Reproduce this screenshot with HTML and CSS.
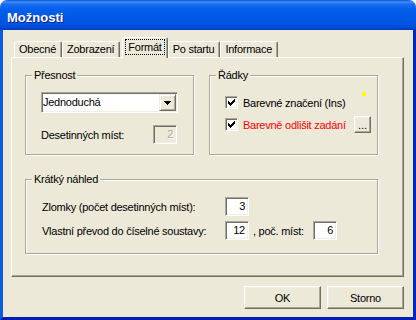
FILE: index.html
```html
<!DOCTYPE html>
<html lang="cs">
<head>
    <meta charset="UTF-8">
    <title>Možnosti</title>
    <link rel="stylesheet" href="styles.css">
</head>
<body>
    <div class="window">
        <div class="titlebar"><span class="title">Možnosti</span></div>

        <div class="frame">
            <!-- tab strip -->
            <div class="tabs">
                <div class="tab">Obecné</div>
                <div class="tab">Zobrazení</div>
                <div class="tab active"><span class="focus">Formát</span></div>
                <div class="tab">Po startu</div>
                <div class="tab">Informace</div>
            </div>

            <div class="panel">
                <div class="top-row">
                    <fieldset class="group presnost">
                        <legend>Přesnost</legend>
                        <div class="select">
                            <span class="select-value">Jednoduchá</span>
                            <span class="select-btn">
                                <svg width="7" height="4" viewBox="0 0 7 4"><path d="M0 0h7v1H0z M1 1h5v1H1z M2 2h3v1H2z M3 3h1v1H3z" fill="#000"/></svg>
                            </span>
                        </div>
                        <div class="field-row">
                            <span>Desetinných míst:</span>
                            <span class="edit disabled">2</span>
                        </div>
                    </fieldset>

                    <fieldset class="group radky">
                        <legend>Řádky</legend>
                        <div class="check-row first">
                            <span class="check">
                                <svg width="7" height="7" viewBox="0 0 7 7"><path d="M6 0h1v1H6z M5 1h2v1H5z M0 2h1v1H0z M4 2h3v1H4z M0 3h2v1H0z M3 3h3v1H3z M0 4h5v1H0z M1 5h3v1H1z M2 6h1v1H2z" fill="#000"/></svg>
                            </span>
                            <span class="check-label">Barevné značení (Ins)</span>
                            <span class="dot"></span>
                        </div>
                        <div class="check-row">
                            <span class="check">
                                <svg width="7" height="7" viewBox="0 0 7 7"><path d="M6 0h1v1H6z M5 1h2v1H5z M0 2h1v1H0z M4 2h3v1H4z M0 3h2v1H0z M3 3h3v1H3z M0 4h5v1H0z M1 5h3v1H1z M2 6h1v1H2z" fill="#000"/></svg>
                            </span>
                            <span class="check-label red">Barevně odlišit zadání</span>
                            <span class="small-btn">...</span>
                        </div>
                    </fieldset>
                </div>

                <fieldset class="group nahled">
                    <legend>Krátký náhled</legend>
                    <div class="preview-grid">
                        <span>Zlomky (počet desetinných míst):</span>
                        <span class="edit">3</span>
                        <span></span>
                        <span></span>

                        <span>Vlastní převod do číselné soustavy:</span>
                        <span class="edit">12</span>
                        <span class="after">, poč. míst:</span>
                        <span class="edit">6</span>
                    </div>
                </fieldset>
            </div>

            <div class="buttons">
                <button class="btn">OK</button>
                <button class="btn">Storno</button>
            </div>
        </div>
    </div>
</body>
</html>
```

FILE: styles.css
```css
/* XP dialog look */
body {
    margin: 0;
    background: #fff;
    font-family: "Liberation Sans", Arial, sans-serif;
    font-size: 11px;
    letter-spacing: -0.25px;
    color: #000;
}

.window {
    width: 416px;
    height: 320px;
    display: flex;
    flex-direction: column;
}

.titlebar {
    height: 30px;
    box-sizing: border-box;
    padding: 10px 0 0 7px;
    border-radius: 7px 7px 0 0;
    background: linear-gradient(to bottom, #0A5ADB 0%, #3D8DF5 7%, #1A6CF2 14%, #0460EC 30%, #0058E6 60%, #0054E1 82%, #0046CF 94%, #003BB8 100%);
}

.title {
    color: #fff;
    font-weight: bold;
    font-size: 13px;
    line-height: 15px;
    letter-spacing: 0;
    text-shadow: 1px 1px 0 #0A1E8C;
}

.frame {
    flex: 1;
    display: flex;
    flex-direction: column;
    background: #ECE9D8;
    border-left: 3px solid #0A5AE4;
    border-right: 3px solid #0028C4;
    border-bottom: 3px solid #001EB4;
    padding: 7px 9px 8px 8px;
}

/* tabs */
.tabs {
    display: flex;
    align-items: flex-end;
    height: 20px;
    padding-left: 3px;
    position: relative;
    z-index: 1;
}

.tab {
    height: 16px;
    box-sizing: border-box;
    padding: 1px 5px 0 4px;
    line-height: 13px;
    background: #ECE9D8;
    border: 1px solid;
    border-bottom: none;
    border-color: #fff #716F64 transparent #fff;
    border-radius: 2px 2px 0 0;
    box-shadow: inset -1px 0 0 #ACA899;
}

.tab.active {
    height: 21px;
    margin: 0 0 -1px 2px;
    padding: 2px 3px 0;
}

.focus {
    display: inline-block;
    outline: 1px dotted #000;
    padding: 0 2px;
    line-height: 14px;
}

.panel {
    height: 220px;
    box-sizing: border-box;
    border: 1px solid;
    border-color: #fff #716F64 #716F64 #fff;
    box-shadow: inset -1px -1px 0 #ACA899;
    padding: 11px 0 0 13px;
}

.top-row {
    display: flex;
    gap: 15px;
    width: 353px;
}

/* group boxes */
.group {
    margin: 0;
    min-width: 0;
    box-sizing: border-box;
    border: 1px solid #ACA899;
    box-shadow: 1px 1px 0 #fff, inset 1px 1px 0 #fff;
    padding: 0 6px 10px 15px;
}

.group legend {
    padding: 0 2px;
    margin-left: -9px;
    line-height: 13px;
    background: #ECE9D8;
}

.presnost, .radky {
    width: 169px;
}

/* combo box */
.select {
    display: flex;
    align-items: center;
    width: 137px;
    height: 21px;
    box-sizing: border-box;
    margin-top: 10px;
    padding: 1px;
    background: #fff;
    border: 1px solid;
    border-color: #ACA899 #fff #fff #ACA899;
    box-shadow: inset 1px 1px 0 #716F64, inset -1px -1px 0 #F1EFE2;
}

.select-value {
    flex: 1;
    line-height: 17px;
}

.select-btn {
    width: 17px;
    height: 17px;
    box-sizing: border-box;
    display: flex;
    align-items: center;
    justify-content: center;
    background: #ECE9D8;
    border: 1px solid;
    border-color: #F1EFE2 #716F64 #716F64 #F1EFE2;
    box-shadow: inset 1px 1px 0 #fff, inset -1px -1px 0 #ACA899;
}

.field-row {
    display: flex;
    justify-content: space-between;
    align-items: center;
    width: 136px;
    margin-top: 12px;
}

/* edit boxes */
.edit {
    width: 24px;
    height: 19px;
    box-sizing: border-box;
    padding-right: 3px;
    text-align: right;
    line-height: 17px;
    background: #fff;
    border: 1px solid;
    border-color: #ACA899 #fff #fff #ACA899;
    box-shadow: inset 1px 1px 0 #716F64, inset -1px -1px 0 #F1EFE2;
}

.edit.disabled {
    background: #ECE9D8;
    color: #ACA899;
    text-shadow: 1px 1px 0 #fff;
}

/* check boxes */
.check-row {
    display: flex;
    align-items: center;
    height: 17px;
    margin-top: 5px;
}

.check-row.first {
    margin-top: 12px;
}

.check {
    width: 13px;
    height: 13px;
    box-sizing: border-box;
    display: flex;
    align-items: center;
    justify-content: center;
    background: #fff;
    border: 1px solid;
    border-color: #ACA899 #fff #fff #ACA899;
    box-shadow: inset 1px 1px 0 #716F64, inset -1px -1px 0 #F1EFE2;
}

.check-label {
    margin-left: 5px;
}

.red {
    color: #f00;
}

.dot {
    width: 4px;
    height: 4px;
    background: #ff0;
    margin-left: auto;
    margin-right: 5px;
    align-self: flex-start;
    margin-top: -2px;
}

.small-btn {
    width: 17px;
    height: 17px;
    box-sizing: border-box;
    margin-left: auto;
    text-align: center;
    line-height: 17px;
    letter-spacing: 0;
    background: #ECE9D8;
    border: 1px solid;
    border-color: #fff #716F64 #716F64 #fff;
    box-shadow: inset -1px -1px 0 #ACA899, inset 1px 1px 0 #F1EFE2;
}

/* preview group */
.nahled {
    width: 353px;
    margin-top: 18px;
    padding: 0 6px 13px 16px;
}

.nahled legend {
    margin-left: -10px;
}

.preview-grid {
    display: grid;
    grid-template-columns: 183px 24px 64px 24px;
    row-gap: 5px;
    align-items: center;
    margin-top: 11px;
}

.after {
    padding-left: 4px;
}

/* dialog buttons */
.buttons {
    display: flex;
    justify-content: flex-end;
    gap: 6px;
    margin-top: 9px;
}

.btn {
    width: 77px;
    height: 23px;
    padding: 0;
    font: inherit;
    letter-spacing: inherit;
    color: #000;
    background: #ECE9D8;
    border: 1px solid;
    border-color: #fff #716F64 #716F64 #fff;
    box-shadow: inset -1px -1px 0 #ACA899, inset 1px 1px 0 #F1EFE2;
}
```
